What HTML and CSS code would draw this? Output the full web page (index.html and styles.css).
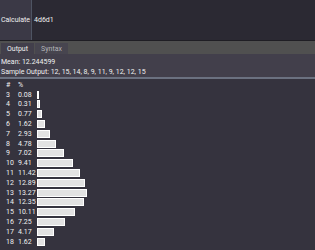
FILE: index.html
```html
<!DOCTYPE html>
<html lang="en">
<head>
    <meta charset="UTF-8">
    <title>Dice</title>
    <link rel="stylesheet" href="styles.css">
</head>
<body>
    <div class="top">
        <button class="calc">Calculate</button>
        <div class="expr">4d6d1</div>
    </div>

    <div class="tabs">
        <div class="tab active">Output</div>
        <div class="tab">Syntax</div>
    </div>

    <div class="summary">
        <div>Mean: 12.244599</div>
        <div>Sample Output: 12, 15, 14, 8, 9, 11, 9, 12, 12, 15</div>
    </div>

    <div class="dist">
        <div class="row head"><span class="num">#</span><span class="pct">%</span></div>
        <div class="row"><span class="num">3</span><span class="pct">0.08</span><span class="bar" style="width:0.3px"></span></div>
        <div class="row"><span class="num">4</span><span class="pct">0.31</span><span class="bar" style="width:1.1px"></span></div>
        <div class="row"><span class="num">5</span><span class="pct">0.77</span><span class="bar" style="width:2.8px"></span></div>
        <div class="row"><span class="num">6</span><span class="pct">1.62</span><span class="bar" style="width:5.8px"></span></div>
        <div class="row"><span class="num">7</span><span class="pct">2.93</span><span class="bar" style="width:10.5px"></span></div>
        <div class="row"><span class="num">8</span><span class="pct">4.78</span><span class="bar" style="width:17.2px"></span></div>
        <div class="row"><span class="num">9</span><span class="pct">7.02</span><span class="bar" style="width:25.3px"></span></div>
        <div class="row"><span class="num">10</span><span class="pct">9.41</span><span class="bar" style="width:33.9px"></span></div>
        <div class="row"><span class="num">11</span><span class="pct">11.42</span><span class="bar" style="width:41.1px"></span></div>
        <div class="row"><span class="num">12</span><span class="pct">12.89</span><span class="bar" style="width:46.4px"></span></div>
        <div class="row"><span class="num">13</span><span class="pct">13.27</span><span class="bar" style="width:47.8px"></span></div>
        <div class="row"><span class="num">14</span><span class="pct">12.35</span><span class="bar" style="width:44.5px"></span></div>
        <div class="row"><span class="num">15</span><span class="pct">10.11</span><span class="bar" style="width:36.4px"></span></div>
        <div class="row"><span class="num">16</span><span class="pct">7.25</span><span class="bar" style="width:26.1px"></span></div>
        <div class="row"><span class="num">17</span><span class="pct">4.17</span><span class="bar" style="width:15px"></span></div>
        <div class="row"><span class="num">18</span><span class="pct">1.62</span><span class="bar" style="width:5.8px"></span></div>
    </div>
</body>
</html>
```

FILE: styles.css
```css
body {
    margin: 0;
    background: #35333e;
    color: #f0f0f0;
    font-family: Roboto, "Liberation Sans", sans-serif;
    font-size: 7px;
    overflow: hidden;
}

.top {
    display: flex;
    height: 40px;
    background: #2b2933;
    border-bottom: 1px solid #1f1e24;
}

.calc {
    width: 32px;
    margin: 0;
    padding: 0;
    border: none;
    border-right: 1px solid #4e5463;
    background: #3b3946;
    color: #f0f0f0;
    font: inherit;
}

.expr {
    flex: 1;
    display: flex;
    align-items: center;
    padding-left: 2px;
}

.tabs {
    display: flex;
    height: 11px;
    padding: 2px 0 0 1px;
    background: #505050;
}

.tab {
    width: 33px;
    margin-right: 1px;
    display: flex;
    align-items: center;
    justify-content: center;
    background: #47454f;
    color: #b4b4b8;
}

.tab.active {
    background: #423f4b;
    color: #f0f0f0;
}

.summary {
    background: #423f4b;
    padding: 3px 1px 0;
    line-height: 10px;
    border-bottom: 2px solid #6b7180;
}

.dist {
    padding-top: 1px;
}

.row {
    display: flex;
    align-items: center;
    height: 9.8px;
}

.num {
    width: 12px;
    padding-left: 6px;
}

.pct {
    width: 19px;
}

.bar {
    height: 6px;
    border: 1px solid #ffffff;
    background: #e2e2e2;
}
```
